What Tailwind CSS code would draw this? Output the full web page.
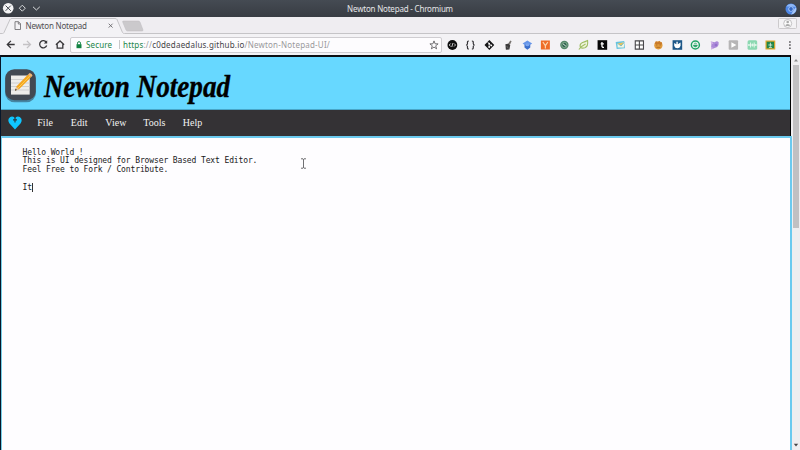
<!DOCTYPE html>
<html lang="en">
<head>
<meta charset="utf-8">
<title>Newton Notepad</title>
<script src="https://cdn.jsdelivr.net/npm/@tailwindcss/browser@4"></script>
</head>
<body class="w-[800px] h-[450px] overflow-hidden bg-[#efedf1] font-['Noto_Sans',sans-serif]">
<div class="flex flex-col w-[800px] h-[450px] overflow-hidden">
  <!-- Window title bar -->
  <header class="relative h-[17px] shrink-0 flex items-center justify-between pl-[2px] pr-[3px] bg-linear-to-b from-[#454b53] to-[#383c43] text-[#e4e5e7]">
    <svg class="w-[42px] h-[17px]" viewBox="2 0 42 17" fill="none" stroke="#d9dbdd">
      <circle cx="8.2" cy="8.2" r="5.3" fill="#f4f4f5" stroke="none"/>
      <path d="M5.6 5.6l5.2 5.2M10.8 5.6l-5.2 5.2" stroke="#41464d"/>
      <path d="M22.3 5.2l3 3-3 3-3-3z"/>
      <path d="M33 6.8l3.4 3.2L39.8 6.8"/>
    </svg>
    <span class="absolute inset-x-0 text-center text-[8px] leading-[17px] tracking-[-0.200px]">Newton Notepad - Chromium</span>
    <svg class="w-[12px] h-[12px]" viewBox="0 0 12 12">
      <circle cx="6" cy="6" r="5.5" fill="#4c86e6"/>
      <path d="M1.5 3.5A5.5 5.5 0 0 1 11 4L6 3.4z" fill="#8fb8f5"/>
      <path d="M6 11.4L9.5 6 11 4A5.5 5.5 0 0 1 6 11.4z" fill="#a9c9f8"/>
      <circle cx="6" cy="6" r="2.6" fill="#bcd4f7"/><circle cx="6" cy="6" r="1.9" fill="#3468c4"/>
    </svg>
  </header>

  <!-- Tab strip -->
  <div class="relative h-[17px] shrink-0 flex bg-[#efedf1]">
    <svg class="absolute inset-0" width="800" height="17" viewBox="0 17 800 17" fill="none">
      <path d="M0 33.5H3.5L10 19.5Q10.5 18.5 12 18.5H115Q116.500 18.500 117 19.500L123 33.500H800V34H0z" fill="#f3f2f5"/>
      <path d="M0 33.500H2.500Q3.500 33.500 4 32.500L10 19.500Q10.500 18.500 12 18.500H115Q116.500 18.500 117 19.500L122.500 32.500Q123 33.500 124.500 33.500H800" stroke="#c5c4c7"/>
      <path d="M123.500 21H138.500Q139.500 21 140 22L143 30Q143.300 31 142 31H127.500Q126.500 31 126 30L122.700 22Q122.300 21 123.500 21z" fill="#cbc9cc" stroke="#bdbbbe" stroke-width=".5"/>
      <path d="M15 21.700h3.500l2 2v5.800H15zM18.300 21.700v2.300h2.200" stroke="#747376" stroke-width=".9"/>
      <path d="M108.700 23.700l3.900 3.900M112.600 23.700l-3.900 3.900" stroke="#69686b" stroke-width=".9"/>
      <rect x="778.500" y="18.500" width="18" height="10" rx="1" fill="#f3f2f4" stroke="#cccacc"/>
      <circle cx="787.700" cy="23.500" r="4" fill="#fafafa" stroke="#b4b3b5" stroke-width=".8"/>
      <circle cx="787.700" cy="22" r="1.300" fill="#aaa"/><path d="M785.400 26q0-2 2.300-2t2.300 2z" fill="#aaa"/>
    </svg>
    <span class="relative ml-[25.500px] mt-[1px] text-[8px] leading-[16px] tracking-[-0.200px] text-[#515053]">Newton Notepad</span>
  </div>

  <!-- Toolbar -->
  <div class="h-[21px] shrink-0 flex items-center bg-[#f3f2f5]">
    <svg class="w-[70px] h-[21px] shrink-0" viewBox="0 34 70 21" fill="none" stroke="#38373a" stroke-width="1.300">
      <path d="M14.700 44.500H7.300M10.900 40.900L7.300 44.500l3.600 3.600"/>
      <path d="M23 44.500h7.400M26.900 40.900l3.600 3.600-3.600 3.600" stroke="#c4c2c5"/>
      <path d="M46.300 42.300A3.600 3.600 0 1 0 46.700 45.500"/><path d="M47.200 40.200v3.400h-3.400z" fill="#38373a" stroke="none"/>
      <path d="M55.900 44.800l4.100-3.800 4.100 3.800M57.200 44.200v4h5.600v-4"/>
    </svg>
    <div class="flex items-center w-[372px] h-[16px] rounded-[2px] border border-[#cfcdd1] bg-[#fdfcfe] text-[8px] leading-[14px] whitespace-nowrap">
      <svg class="w-[6px] h-[8px] ml-[4.500px]" viewBox="0 0 6 8"><path d="M.5 3.200h5v4h-5z" fill="#128343"/><path d="M1.500 3.500V2.200a1.500 1.500 0 0 1 3 0v1.300" fill="none" stroke="#128343"/></svg>
      <span class="ml-[4.500px] w-[32.500px] text-[#1b8549] tracking-[0.150px]">Secure</span>
      <span class="w-px h-[9px] bg-[#c9c8ca]"></span>
      <span class="ml-[3.500px] text-[#9a999c] tracking-[0.200px]"><span class="text-[#1b8549]">https</span>://<span class="text-[#454447]">c0dedaedalus.github.io</span>/Newton-Notepad-UI/</span>
      <svg class="w-[10px] h-[10px] ml-auto mr-[2.500px]" viewBox="0 0 10 10"><path d="M5 .9l1.100 2.900 3 .1-2.400 1.900.9 3L5 7.100 2.400 8.800l.9-3L.9 3.900l3-.1z" fill="none" stroke="#626164" stroke-width=".9"/></svg>
    </div>
    <div class="flex ml-[.6px]">
      <svg class="w-[18.750px] h-[12px]" viewBox="-9.375 -6 18.750 12"><circle r="4.900" fill="#0d0d0e"/><path d="M-1.700-1.500L-3.200 0l1.500 1.500M1.700-1.500L3.200 0 1.700 1.500M.6-2l-1.200 4" fill="none" stroke="#fff" stroke-width=".75"/></svg>
      <svg class="w-[18.750px] h-[12px]" viewBox="-9.375 -6 18.750 12" fill="none" stroke="#333236" stroke-width="1.200"><path d="M-1.500-4C-3.200-4-2.900-3-2.900-1.500Q-2.900 0-4.400 0-2.900 0-2.900 1.500C-2.900 3-3.200 4-1.500 4M1.500-4C3.200-4 2.900-3 2.900-1.500Q2.900 0 4.400 0 2.900 0 2.900 1.500C2.900 3 3.200 4 1.500 4"/></svg>
      <svg class="w-[18.750px] h-[12px]" viewBox="-9.375 -6 18.750 12"><path d="M0-4.900L4.900 0 0 4.900-4.900 0z" fill="#151517"/><path d="M-1.700-3L-.2-1.300V2M-.2-1.300L1.700.4" stroke="#fff" stroke-width=".7" fill="none"/><circle cx="-.2" cy="-1.300" r=".9" fill="#fff"/><circle cx="-.2" cy="2" r=".9" fill="#fff"/><circle cx="1.900" cy=".4" r=".9" fill="#fff"/></svg>
      <svg class="w-[18.750px] h-[12px]" viewBox="-9.375 -6 18.750 12"><path d="M-3-.7L.6-1.500 1.800.6 1 4.600-2.500 4.800z" fill="#3b3a3b"/><path d="M-.2-1.500L2-4.500l1.200.8L1.500 0z" fill="#77736f"/><path d="M-1.700 1l1.600 2.300" stroke="#777" stroke-width=".7"/></svg>
      <svg class="w-[18.750px] h-[12px]" viewBox="-9.375 -6 18.750 12"><path d="M0-4.600L4.800-1.400 0 1.700-4.800-1.400z" fill="#6595e8"/><path d="M-2.900-.5L0 1.300 2.900-.5V2.500L0 4.700-2.900 2.500z" fill="#3c70cd"/><path d="M-1.500-1.500h3v2.500h-3z" fill="#7ba5ee"/></svg>
      <svg class="w-[18.750px] h-[12px]" viewBox="-9.375 -6 18.750 12"><path d="M-4.500-4.500h9v9h-9z" fill="#ef6d27"/><path d="M-2.500-3L0 .7 2.500-3M0 .5v3" fill="none" stroke="#fbd6b0" stroke-width="1.200"/></svg>
      <svg class="w-[18.750px] h-[12px]" viewBox="-9.375 -6 18.750 12"><circle r="4.200" fill="#53866a"/><circle r="2.600" fill="#2b614e" stroke="#a7c6a8" stroke-width=".6"/><path d="M-1.400-1.200L1.500 1.200" stroke="#e0ece2"/></svg>
      <svg class="w-[18.750px] h-[12px]" viewBox="-9.375 -6 18.750 12"><path d="M4.200-4.500Q5 1.500 1.500 2.800-1.300 3.700-3 2.400-4.200-.9-.8-2.500 1.800-3.200 4.200-4.500zM-4.500 4.500Q-2 1 2.200-1" fill="#f0f4dd" stroke="#9ebd60" stroke-width="1.100"/></svg>
      <svg class="w-[18.750px] h-[12px]" viewBox="-9.375 -6 18.750 12"><path d="M-4.800-4.800h9.600v9.600h-9.600z" fill="#080808"/><path d="M-.4-3V1.300Q-.4 2.500 1.600 2.300M-1.700-1.200h3.200" fill="none" stroke="#fff" stroke-width="1.300"/></svg>
      <svg class="w-[18.750px] h-[12px]" viewBox="-9.375 -6 18.750 12"><path d="M-4.700-3L3.800-4 4.600 3.200-3.700 4z" fill="#66c4e0"/><path d="M-3-1.600L3.800-2.500 3.500 2.400-2.700 2.600z" fill="#f5f3df"/><path d="M-3-1.800L.7 1 3.800-2.500" fill="#e6c25d" stroke="#57b4d1" stroke-width=".7"/></svg>
      <svg class="w-[18.750px] h-[12px]" viewBox="-9.375 -6 18.750 12"><path d="M-4.100-4.100h8.200v8.200h-8.200zM0-4.100v8.200M-4.100 0h8.200" fill="#fff" stroke="#49484b" stroke-width="1.100"/></svg>
      <svg class="w-[18.750px] h-[12px]" viewBox="-9.375 -6 18.750 12"><circle cy=".3" r="4.100" fill="#e09a3a"/><path d="M-3.500-1L-2.500-4l2 1.500L1-4.300l1 1.800L3.500-2.800V-.500z" fill="#c8792a"/><path d="M-2.300 0h1.300M1.200 0h1.300M-2 2.300h4" stroke="#a4621f" stroke-width=".8"/></svg>
      <svg class="w-[18.750px] h-[12px]" viewBox="-9.375 -6 18.750 12"><path d="M-4.800-4.800h9.600v9.600h-9.600z" fill="#1d5788"/><path d="M-3.200-2L-1-.8V-3.300H.4V-.8L3.200-2.400V.7Q2.500 3.300 0 3.300T-3.200.7z" fill="#fff"/></svg>
      <svg class="w-[18.750px] h-[12px]" viewBox="-9.375 -6 18.750 12"><circle r="4" fill="#f5faf6" stroke="#20a465" stroke-width="1.500"/><path d="M-2 0h4Q2 2 0 2T-2 0zM-1.500-1.500Q0-2.500 1.500-1.500" fill="#2ca56b" stroke="#2ca56b" stroke-width=".6"/></svg>
      <svg class="w-[18.750px] h-[12px]" viewBox="-9.375 -6 18.750 12"><path d="M-3.500-3.500L.5-2.700Q2.500-4.700 4.300-2.800 4.800-.5 2.800 2-.5 3.400-3 4.500-3.500 2-3-.5z" fill="#ab8ad8"/><path d="M-3.800-3.500l3 1.500-2 1.600zM-3.300 2L-1 3l-2 1.600z" fill="#d5b7e9"/><circle cx="1.500" r="1.300" fill="#9470cc"/></svg>
      <svg class="w-[18.750px] h-[12px]" viewBox="-9.375 -6 18.750 12"><rect x="-4.700" y="-4.700" width="9.400" height="9.400" rx="1" fill="#b6b5b6"/><path d="M-2-2.800L3 0-2 2.800z" fill="#fff"/></svg>
      <svg class="w-[18.750px] h-[12px]" viewBox="-9.375 -6 18.750 12"><rect x="-4.800" y="-4.800" width="9.600" height="9.600" rx="1.500" fill="#8bd8b1"/><path d="M-3.500-1v2M-1.800-2.500v5M0-1.500v3M1.800-2.500v5M3.500-1v2M-4 0h8" stroke="#effaf4" stroke-width=".9"/></svg>
      <svg class="w-[18.750px] h-[12px]" viewBox="-9.375 -6 18.750 12"><path d="M-4.900-4.500h9.800v9h-9.800z" fill="#dda82d"/><path d="M-3.700-3.300h7.400v6.600h-7.400z" fill="#20854a"/><path d="M0-2.300V1.700M-2 0h4M-1.500 2.400h3" stroke="#d7ead9" stroke-width=".9"/></svg>
      <svg class="w-[18.750px] h-[12px]" viewBox="-9.375 -6 18.750 12" fill="#49484b"><path d="M-.2-3.800h1.500v1.500H-.2zM-.2-.700h1.500v1.500H-.2zM-.2 2.400h1.500v1.500H-.2z"/></svg>
    </div>
  </div>

  <!-- Page viewport -->
  <div class="flex flex-1 min-h-0">
    <main class="w-[792px] flex flex-col border-l border-[#06162a]">
      <div class="w-[790px] h-[81px] shrink-0 border-t-2 border-r border-black border-t-[#0b0e12] bg-[#343235]">
        <div class="flex items-center h-[53px] border-b border-[#48a6c8] bg-[#67d8ff]">
          <svg class="w-[34px] h-[36px] ml-[3px] mt-[5px]" viewBox="0 0 34 36">
            <rect x="1" y="2.200" width="31" height="32" rx="9.500" fill="#335b72" opacity=".65"/>
            <rect x="1.300" y="1.200" width="30.400" height="31" rx="9" fill="#424953"/>
            <path d="M7 7.500h18.700v18.500H7z" fill="#eeedeb"/>
            <path d="M7 11.500h18.700M7 15h18.700M7 18.500h18.700M7 22h18.700" stroke="#c5c6c8" stroke-width=".8"/>
            <path d="M7 26h18.700v1H7z" fill="#a9abad"/>
            <path d="M11 22.500l1.400-4L24 6.500l3 2.800-12 12z" fill="#f5a51f"/>
            <path d="M14 20l11.800-12" stroke="#ffcf4f" stroke-width="1"/>
            <path d="M24 6.500l1.700-1.500q2.400.6 2.800 2.700L27 9.300z" fill="#efb777"/>
            <path d="M11 22.500l1.400-4 2.600 2.800z" fill="#e8c59b"/><path d="M11 22.700l.7-2 1.200 1.300z" fill="#222"/>
          </svg>
          <h1 class="flex"><svg class="w-[210px] h-[52px] ml-[3px] overflow-visible" viewBox="-2 0 210 52"><text x="1" y="40" textLength="186" lengthAdjust="spacingAndGlyphs" class="font-['Liberation_Serif',serif] text-[32px] font-bold italic" fill="#000" stroke="#000" stroke-width=".4">Newton Notepad</text></svg></h1>
        </div>
        <nav class="flex items-center h-[26px] font-['Liberation_Serif',serif] text-[10px] leading-[26px] text-[#f2f2f2]">
          <svg class="w-[14px] h-[14px] ml-[7px]" viewBox="0 0 14 14"><path d="M7 13.400L1.300 7.200Q-.3 5 .8 2.600 2 .5 4.200.6 6 .7 7 2.200 8 .7 9.800.6q2.200-.1 3.400 2 1.100 2.400-.5 4.600z" fill="#0fc6ff"/><path d="M7 1.600v4.800M5 3.900h4" stroke="#293a42" stroke-width="1.200"/></svg>
          <span class="w-[33.500px] ml-[15.300px]">File</span><span class="w-[34.500px]">Edit</span><span class="w-[38px]">View</span><span class="w-[39.500px]">Tools</span><span>Help</span>
        </nav>
      </div>
      <div class="relative w-[791px] flex-1 border-2 border-b-0 border-[#6bcaef] border-l-[#75cfe8] border-l-1 bg-[#fefdff] pl-[20.500px] pt-[10.600px]">
        <pre class="font-['DejaVu_Sans_Mono',monospace] text-[8px] leading-[8.750px] tracking-[-0.120px] text-[#19191b]">Hello World !
This is UI designed for Browser Based Text Editor.
Feel Free to Fork / Contribute.

It<span class="border-r border-[#333]"></span></pre>
        <svg class="absolute left-[298px] top-[20px] w-[7px] h-[11px]" viewBox="0 0 7 11"><path d="M1 .8h2l.5.5.5-.5h2M3.500 1v9M1 10.200h2l.5-.5.5.5h2" fill="none" stroke="#707073" stroke-width="1"/></svg>
      </div>
    </main>
    <!-- Scrollbar -->
    <aside class="w-[8px] flex flex-col items-center bg-[#efeef0]">
      <svg class="w-[8px] h-[10px] shrink-0" viewBox="0 0 8 10"><path d="M2 6.500L4 4l2 2.500z" fill="#8a898b"/></svg>
      <div class="w-[6px] h-[163px] bg-[#c1c0c2]"></div>
      <svg class="w-[8px] h-[10px] mt-auto" viewBox="0 0 8 10"><path d="M1.800 3.800h4.400L4 6.500z" fill="#464547"/></svg>
    </aside>
  </div>
</div>
</body>
</html>
